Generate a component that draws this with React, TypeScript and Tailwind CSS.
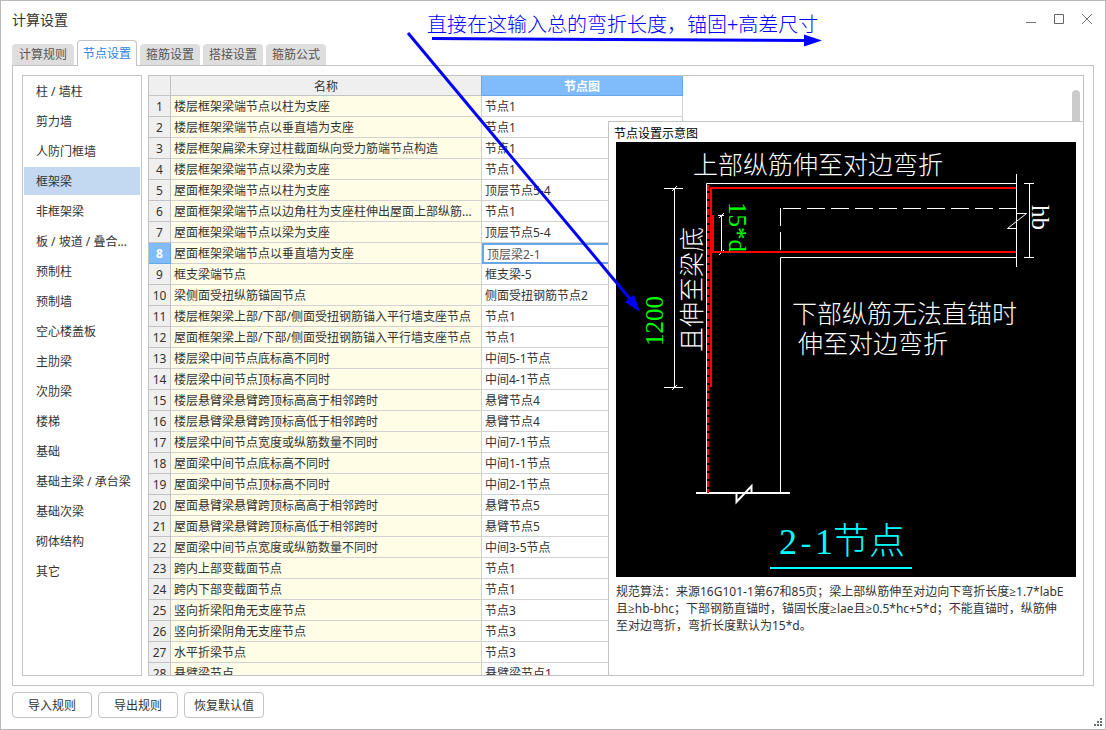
import React, { useState } from 'react'

const tabs = ['计算规则', '节点设置', '箍筋设置', '搭接设置', '箍筋公式']

const categories = [
    '柱 / 墙柱', '剪力墙', '人防门框墙', '框架梁', '非框架梁', '板 / 坡道 / 叠合...',
    '预制柱', '预制墙', '空心楼盖板', '主肋梁', '次肋梁', '楼梯', '基础',
    '基础主梁 / 承台梁', '基础次梁', '砌体结构', '其它',
]

const rows = [
    ['楼层框架梁端节点以柱为支座', '节点1'],
    ['楼层框架梁端节点以垂直墙为支座', '节点1'],
    ['楼层框架扁梁未穿过柱截面纵向受力筋端节点构造', '节点1'],
    ['楼层框架梁端节点以梁为支座', '节点1'],
    ['屋面框架梁端节点以柱为支座', '顶层节点5-4'],
    ['屋面框架梁端节点以边角柱为支座柱伸出屋面上部纵筋...', '节点1'],
    ['屋面框架梁端节点以梁为支座', '顶层节点5-4'],
    ['屋面框架梁端节点以垂直墙为支座', '顶层梁2-1'],
    ['框支梁端节点', '框支梁-5'],
    ['梁侧面受扭纵筋锚固节点', '侧面受扭钢筋节点2'],
    ['楼层框架梁上部/下部/侧面受扭钢筋锚入平行墙支座节点', '节点1'],
    ['屋面框架梁上部/下部/侧面受扭钢筋锚入平行墙支座节点', '节点1'],
    ['楼层梁中间节点底标高不同时', '中间5-1节点'],
    ['楼层梁中间节点顶标高不同时', '中间4-1节点'],
    ['楼层悬臂梁悬臂跨顶标高高于相邻跨时', '悬臂节点4'],
    ['楼层悬臂梁悬臂跨顶标高低于相邻跨时', '悬臂节点4'],
    ['楼层梁中间节点宽度或纵筋数量不同时', '中间7-1节点'],
    ['屋面梁中间节点底标高不同时', '中间1-1节点'],
    ['屋面梁中间节点顶标高不同时', '中间2-1节点'],
    ['屋面悬臂梁悬臂跨顶标高高于相邻跨时', '悬臂节点5'],
    ['屋面悬臂梁悬臂跨顶标高低于相邻跨时', '悬臂节点5'],
    ['屋面梁中间节点宽度或纵筋数量不同时', '中间3-5节点'],
    ['跨内上部变截面节点', '节点1'],
    ['跨内下部变截面节点', '节点1'],
    ['竖向折梁阳角无支座节点', '节点3'],
    ['竖向折梁阴角无支座节点', '节点3'],
    ['水平折梁节点', '节点3'],
    ['悬臂梁节点', '悬臂梁节点1'],
]

const EDIT_ROW = 7

const NodeDiagram = () => (
    <svg
        viewBox="0 0 460 435"
        className="block w-full bg-black font-['Liberation_Serif','Noto_Sans_CJK_SC',serif] font-light"
        fill="none"
        fontSize="25"
    >
        {/* concrete outline */}
        <g stroke="#fff" strokeWidth="1">
            <path d="M90.5 350V41.5H400" />
            <path d="M164.5 350V115.5H400" />
            <path d="M400.5 32V125" />
            <path d="M400 71.5H410.5L391.5 86.5H400" />
            <path d="M167 66.5H400" strokeDasharray="18 6" />
            <path d="M164.5 66V109" strokeDasharray="18 6" />
            {/* dimension lines */}
            <path d="M58.5 46V245M48 46.5H67M48 245.5H67M56 49L61 44M56 248L61 243" />
            <path d="M105.5 73V111M102 73.5H108M103 76L108 71M103 113L108 108" />
            <path d="M413.5 41V116M408 41.5H418M408 115.5H418" />
        </g>
        <path d="M80 351H174M120.5 351V360L135.5 344V351" stroke="#fff" strokeWidth="2" />
        {/* rebar */}
        <g stroke="#f00" strokeWidth="2">
            <path d="M400 46H95V245" />
            <path d="M400 110H97V73" />
            <path d="M92 43V351" strokeDasharray="6 2" />
        </g>
        <g fill="#fff">
            <text x="77" y="32">上部纵筋伸至对边弯折</text>
            <text x="176" y="181">下部纵筋无法直锚时</text>
            <text x="182" y="211">伸至对边弯折</text>
            <text transform="translate(85 210) rotate(-90)">且伸至梁底</text>
            <text transform="translate(416 63) rotate(90)">hb</text>
        </g>
        <g fill="#0f0">
            <text transform="translate(47 204) rotate(-90)">1200</text>
            <text transform="translate(113 60) rotate(90)">15*d</text>
        </g>
        <text x="163" y="412" fill="#0ff" fontSize="36">
            2<tspan fontFamily="Liberation Mono" fontSize="30">-</tspan>1节点
        </text>
        <path d="M154 426H296" stroke="#0ff" strokeWidth="2" />
    </svg>
)

const Annotation = () => (
    <svg
        width="430"
        height="310"
        viewBox="400 8 430 310"
        className="absolute left-[399px] top-[7px] z-20 pointer-events-none font-['Liberation_Serif','Noto_Sans_CJK_SC',sans-serif] font-light"
        fill="#00f"
    >
        <text x="427" y="32" fontSize="20">直接在这输入总的弯折长度，锚固+高差尺寸</text>
        <path d="M432 38.5L806 40.5" stroke="#00f" strokeWidth="3" />
        <path d="M822 40.5L804 34.5V46.5Z" />
        <path d="M408 33L631 300" stroke="#00f" strokeWidth="3" />
        <path d="M640 312L625 302L634 295Z" />
    </svg>
)

const App = () => {
    const [tab, setTab] = useState(1)
    const [category, setCategory] = useState(3)
    const [nodeName, setNodeName] = useState(rows[EDIT_ROW][1])

    return (
        <div className="relative flex flex-col h-screen bg-white border border-[#b9b9b9] text-xs text-[#333] font-['Noto_Sans','Open_Sans','Noto_Sans_CJK_SC',sans-serif]">
            <header className="flex items-center justify-between h-9 mb-[3px] shrink-0 pl-[11px] pr-3">
                <h1 className="pt-[2px] text-sm">计算设置</h1>
                <div className="flex gap-4">
                    <button aria-label="最小化" className="w-3 h-3">
                        <svg viewBox="0 0 12 12" stroke="#777"><path d="M1 9.5H11" /></svg>
                    </button>
                    <button aria-label="最大化" className="w-3 h-3">
                        <svg viewBox="0 0 12 12" stroke="#666" fill="none"><path d="M1.5 1.5H10.5V10.5H1.5Z" /></svg>
                    </button>
                    <button aria-label="关闭" className="w-3 h-3">
                        <svg viewBox="0 0 12 12" stroke="#777"><path d="M1 1L11 11M11 1L1 11" /></svg>
                    </button>
                </div>
            </header>

            <div role="tablist" className="relative z-10 flex items-end gap-[3px] h-[26px] shrink-0 mx-[11px] -mb-px">
                {tabs.map((name, i) => (
                    <button
                        key={name}
                        role="tab"
                        aria-selected={tab === i}
                        onClick={() => setTab(i)}
                        className={
                            tab === i
                                ? 'h-[26px] px-[5px] rounded-t border border-b-0 border-[#c3c3c3] bg-white text-[#2a7fe0]'
                                : 'h-[21px] px-[6px] mb-px first:px-[7px] rounded-t bg-[#dedede] text-[#555]'
                        }
                    >
                        {name}
                    </button>
                ))}
            </div>

            <main className="flex flex-1 min-h-0 gap-[6px] mx-[11px] p-[9px] border border-[#c3c3c3]">
                <nav className="flex flex-col gap-[2px] w-[120px] shrink-0 px-px pt-px border border-[#c3c3c3] overflow-hidden">
                    {categories.map((name, i) => (
                        <button
                            key={name}
                            onClick={() => setCategory(i)}
                            className={
                                category === i
                                    ? 'h-7 shrink-0 pl-3 pt-[2px] text-left whitespace-nowrap bg-[#c2d9f1]'
                                    : 'h-7 shrink-0 pl-3 pt-[2px] text-left whitespace-nowrap'
                            }
                        >
                            {name}
                        </button>
                    ))}
                </nav>

                <section className="relative flex-1 min-w-0 border border-[#c3c3c3] overflow-hidden">
                    <table className="table-fixed w-[534px] border-separate border-spacing-0 whitespace-nowrap">
                        <colgroup>
                            <col className="w-[22px]" />
                            <col className="w-[311px]" />
                            <col className="w-[201px]" />
                        </colgroup>
                        <thead>
                            <tr className="h-5">
                                <th aria-label="序号" className="p-0 bg-[#efefef] border-r border-b border-[#c3c3c3]"></th>
                                <th className="p-0 pt-[2px] bg-[#efefef] border-b border-r border-b-[#c3c3c3] border-r-[#66a7e8] font-normal leading-4">名称</th>
                                <th className="p-0 pt-[2px] bg-[#80bbfc] border-r border-b border-[#66a7e8] font-bold text-white leading-4">节点图</th>
                            </tr>
                        </thead>
                        <tbody>
                            {rows.map(([name, node], i) => (
                                <tr key={i} className="h-[21px]">
                                    <th
                                        className={
                                            i === EDIT_ROW
                                                ? 'p-0 pt-[2px] bg-[#80bbfc] border-r border-b border-[#66a7e8] font-bold text-white leading-4'
                                                : 'p-0 pt-[2px] bg-[#efefef] border-r border-b border-[#c3c3c3] font-normal leading-4'
                                        }
                                    >
                                        {i + 1}
                                    </th>
                                    <td className="p-0 pl-[3px] pt-[2px] bg-[#fffde6] border-r border-b border-[#d2d2d2] leading-4">{name}</td>
                                    {i === EDIT_ROW ? (
                                        <td className="p-0">
                                            <input
                                                aria-label="节点图"
                                                value={nodeName}
                                                onChange={(e) => setNodeName(e.target.value)}
                                                className="block w-full h-[21px] pl-[3px] border-2 border-[#66a7e8] bg-white text-[#555] outline-none"
                                            />
                                        </td>
                                    ) : (
                                        <td className="p-0 pl-[3px] pt-[2px] border-r border-b border-[#d2d2d2] leading-4">{node}</td>
                                    )}
                                </tr>
                            ))}
                        </tbody>
                    </table>

                    <div className="absolute right-[3px] top-[14px] w-2 h-40 rounded-full bg-[#cbcbcb]" />

                    {/* preview of the selected node */}
                    <aside className="absolute right-0 top-[45px] bottom-0 w-[475px] pl-[7px] pr-[7px] bg-white border-t border-l border-[#c3c3c3]">
                        <h2 className="-ml-[2px] h-5 leading-6 text-black">节点设置示意图</h2>
                        <NodeDiagram />
                        <p className="pt-[6px] leading-[17px] whitespace-nowrap">
                            规范算法：来源16G101-1第67和85页；梁上部纵筋伸至对边向下弯折长度≥1.7*labE<br />
                            且≥hb-bhc；下部钢筋直锚时，锚固长度≥lae且≥0.5*hc+5*d；不能直锚时，纵筋伸<br />
                            至对边弯折，弯折长度默认为15*d。
                        </p>
                    </aside>
                </section>
            </main>

            <footer className="flex gap-[6px] shrink-0 px-[11px] pt-[6px] pb-[11px]">
                {['导入规则', '导出规则', '恢复默认值'].map((name) => (
                    <button key={name} className="w-20 h-[26px] pt-[2px] rounded border border-[#c3c3c3] bg-white">
                        {name}
                    </button>
                ))}
            </footer>

            <svg width="8" height="8" viewBox="0 0 8 8" fill="#6b6f78" className="absolute right-[3px] bottom-[3px]">
                <path d="M6 0h2v2h-2zM3 3h2v2h-2zM6 3h2v2h-2zM0 6h2v2h-2zM3 6h2v2h-2zM6 6h2v2h-2z" />
            </svg>

            <Annotation />
        </div>
    )
}

export default App
